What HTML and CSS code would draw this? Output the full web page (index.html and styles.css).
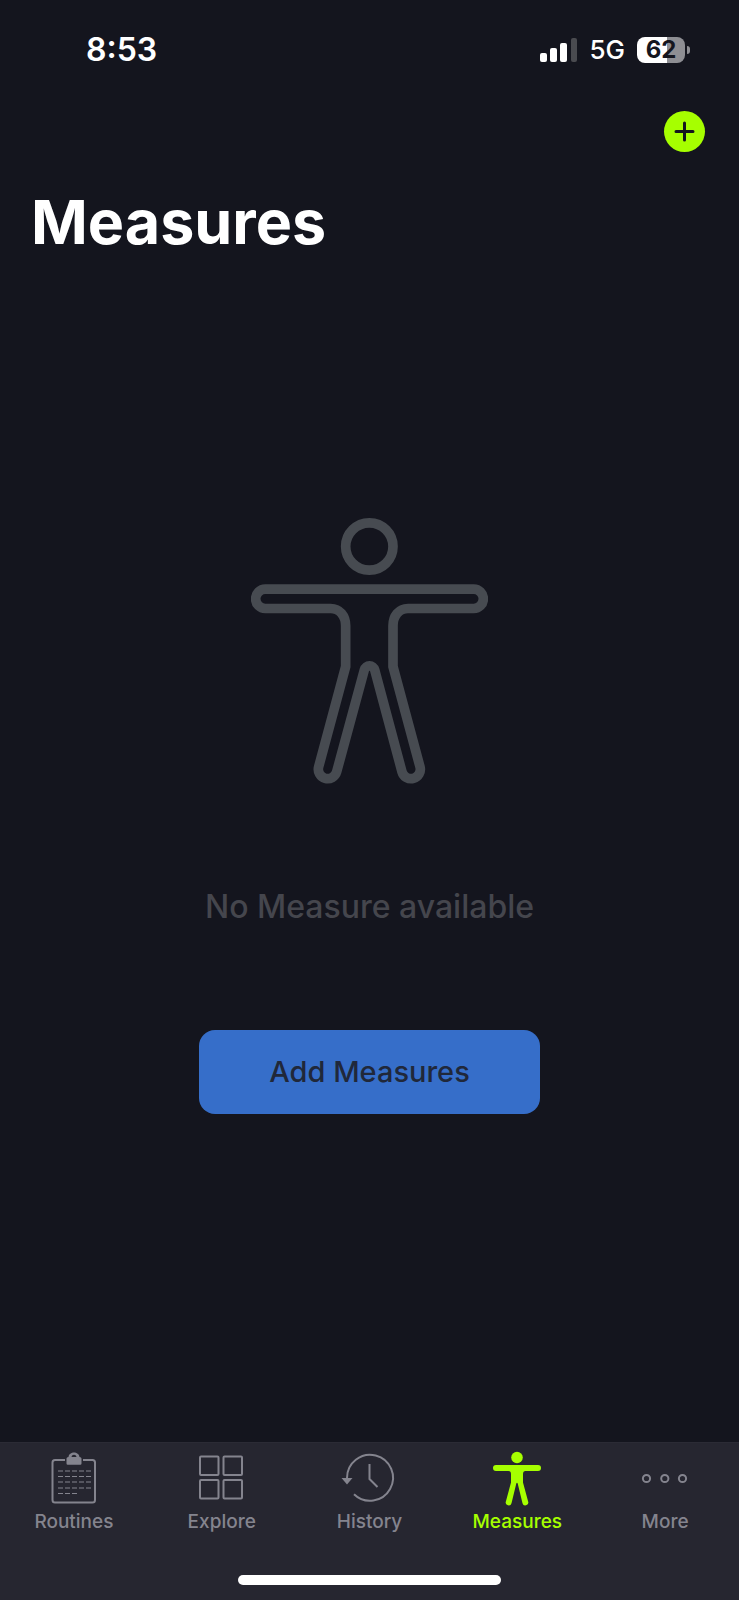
FILE: index.html
```html
<!DOCTYPE html>
<html lang="en">
<head>
<meta charset="utf-8">
<meta name="viewport" content="width=device-width, initial-scale=1">
<title>Measures</title>
<link rel="stylesheet" href="styles.css">
</head>
<body>
<div class="status">
  <span class="time">8:53</span>
  <div class="indicators">
    <svg class="signal" width="37" height="24" viewBox="0 0 37 24" aria-hidden="true">
      <rect x="0" y="15" width="7" height="9" rx="2"/>
      <rect x="10" y="10" width="7" height="14" rx="2"/>
      <rect x="20" y="5" width="7" height="19" rx="2"/>
      <rect class="off" x="31" y="0" width="6" height="24" rx="2"/>
    </svg>
    <span class="network">5G</span>
    <div class="battery"><span class="level">62</span><span class="tip"></span></div>
  </div>
</div>
<header class="header">
  <button class="add" type="button" aria-label="Add">
    <svg width="21" height="21" viewBox="0 0 21 21" aria-hidden="true"><path d="M10.500 2v17M2 10.500h17"/></svg>
  </button>
  <h1 class="title">Measures</h1>
</header>
<main class="empty">
  <svg class="figure" width="237" height="267" viewBox="33 38 711 800" aria-hidden="true">
    <circle cx="388" cy="126" r="71"/>
    <path d="M76 254H701a29 29 0 0 1 0 58H504c-27 0-45 22-45 52V486L540 787a28 28 0 0 1-54 15L404 496a16 16 0 0 0-31 0L290 802a28 28 0 0 1-54-15L317 486V364c0-30-18-52-45-52H76a29 29 0 0 1 0-58z"/>
  </svg>
  <p class="message">No Measure available</p>
  <button class="primary" type="button">Add Measures</button>
</main>
<footer class="footer">
  <nav class="tabs">
    <a class="tab" href="#routines">
      <svg class="icon" width="60" height="56" viewBox="0 0 60 56" aria-hidden="true">
        <rect class="line" x="8.500" y="9" width="42.500" height="42.500" rx="2.500"/>
        <path class="gap" d="M21 7h18v5H21z"/>
        <path class="solid" fill-rule="evenodd" d="M22.500 7.500q0-1.500 2-1.500C25 0 35 0 35.500 6q2 0 2 1.500v5q0 1.200-1.200 1.200H23.700q-1.200 0-1.200-1.200zM27.500 6h5c-.5-3-4.500-3-5 0z"/>
        <path class="dash" d="M14 20h33M14 25.500h33M14 31h33M14 37h33M14 42.500h19"/>
      </svg>
      <span>Routines</span>
    </a>
    <a class="tab" href="#explore">
      <svg class="icon" width="60" height="56" viewBox="0 0 60 56" aria-hidden="true">
        <g class="line"><rect x="8" y="5.500" width="18.500" height="18.500" rx="1"/><rect x="31.500" y="5.500" width="18.500" height="18.500" rx="1"/><rect x="8" y="29" width="18.500" height="18.500" rx="1"/><rect x="31.500" y="29" width="18.500" height="18.500" rx="1"/></g>
      </svg>
      <span>Explore</span>
    </a>
    <a class="tab" href="#history">
      <svg class="icon" width="60" height="56" viewBox="0 0 60 56" aria-hidden="true">
        <path class="line" d="M8 28v-1A23 23 0 1 1 15 43.300M30.500 13v15l8 8"/>
        <path class="solid" d="M2.500 27h11L8 33.500z"/>
      </svg>
      <span>History</span>
    </a>
    <a class="tab active" href="#measures" aria-current="page">
      <svg class="icon" width="60" height="56" viewBox="0 0 60 56" aria-hidden="true">
        <circle class="solid" cx="30" cy="6.500" r="5.800"/>
        <path class="solid" d="M9 14h42a3 3 0 0 1 0 6H38.500q-2.500 0-2.500 3v8.500l5.200 19.200a2.900 2.900 0 0 1-5.700 1.500L30.700 32.500q-.7-1.500-1.400 0L24.500 52.200a2.900 2.900 0 0 1-5.700-1.500L24 31.500V23q0-3-2.500-3H9a3 3 0 0 1 0-6z"/>
      </svg>
      <span>Measures</span>
    </a>
    <a class="tab" href="#more">
      <svg class="icon" width="60" height="56" viewBox="0 0 60 56" aria-hidden="true">
        <g class="line"><circle cx="11.500" cy="27.500" r="3.600"/><circle cx="29.800" cy="27.500" r="3.600"/><circle cx="47.500" cy="27.500" r="3.600"/></g>
      </svg>
      <span>More</span>
    </a>
  </nav>
  <div class="home"></div>
</footer>
</body>
</html>
```
FILE: styles.css
```css
* { box-sizing: border-box; }
body {
  margin: 0;
  min-height: 100vh;
  display: flex;
  flex-direction: column;
  background: #14151e;
  color: #fff;
  font-family: Inter, "Liberation Sans", sans-serif;
}
button { border: 0; padding: 0; font: inherit; cursor: pointer; }
.status {
  display: flex;
  justify-content: space-between;
  align-items: center;
  padding: 30px 49px 0 86px;
}
.time { font-size: 32px; line-height: 40px; font-weight: 600; }
.indicators { display: flex; align-items: center; gap: 12px; }
.signal { fill: #fff; }
.signal .off { fill: #4a4b50; }
.network { font-size: 26px; line-height: 40px; font-weight: 500; }
.battery { display: flex; align-items: center; gap: 2px; }
.level {
  width: 48px;
  border-radius: 8px;
  background: linear-gradient(90deg, #fff 63%, #8e8e93 63%);
  color: #15161e;
  font-size: 24px;
  line-height: 26px;
  font-weight: 700;
  text-align: center;
}
.tip { width: 3px; height: 8px; border-radius: 0 4px 4px 0; background: #8e8e93; }
.header {
  display: flex;
  flex-direction: column;
  padding: 41px 34px 0 31px;
}
.add {
  align-self: flex-end;
  display: grid;
  place-items: center;
  width: 41px;
  height: 41px;
  border-radius: 50%;
  background: #a6ff00;
}
.add svg { stroke: #15161e; stroke-width: 3; stroke-linecap: round; }
.title { margin: 32px 0 0; font-size: 61px; line-height: 76px; font-weight: 700; }
.empty {
  flex: 1;
  display: flex;
  flex-direction: column;
  align-items: center;
  padding-top: 257px;
}
.figure { fill: none; stroke: #474b51; stroke-width: 29; }
.message {
  margin: 103px 0 0;
  color: #45464d;
  font-size: 32px;
  line-height: 40px;
  font-weight: 500;
}
.primary {
  margin-top: 103px;
  padding: 0 70px;
  border-radius: 16px;
  background: #366ec9;
  color: #20283a;
  font-size: 29px;
  line-height: 84px;
  font-weight: 500;
}
.footer {
  padding: 8px 0 15px;
  border-top: 1px solid #2b2b35;
  background: #262630;
}
.tabs { display: grid; grid-template-columns: repeat(5, 1fr); }
.tab {
  display: flex;
  flex-direction: column;
  align-items: center;
  gap: 3px;
  color: #84848e;
  text-decoration: none;
  font-size: 19px;
  line-height: 24px;
  font-weight: 500;
}
.tab.active { color: #a6ff00; }
.line { fill: none; stroke: currentColor; stroke-width: 2; }
.solid { fill: currentColor; }
.gap { fill: #262630; }
.dash { fill: none; stroke: currentColor; stroke-width: 1; stroke-dasharray: 5 2; }
.home {
  width: 263px;
  height: 10px;
  margin: 41px auto 0;
  border-radius: 5px;
  background: #fff;
}
```
